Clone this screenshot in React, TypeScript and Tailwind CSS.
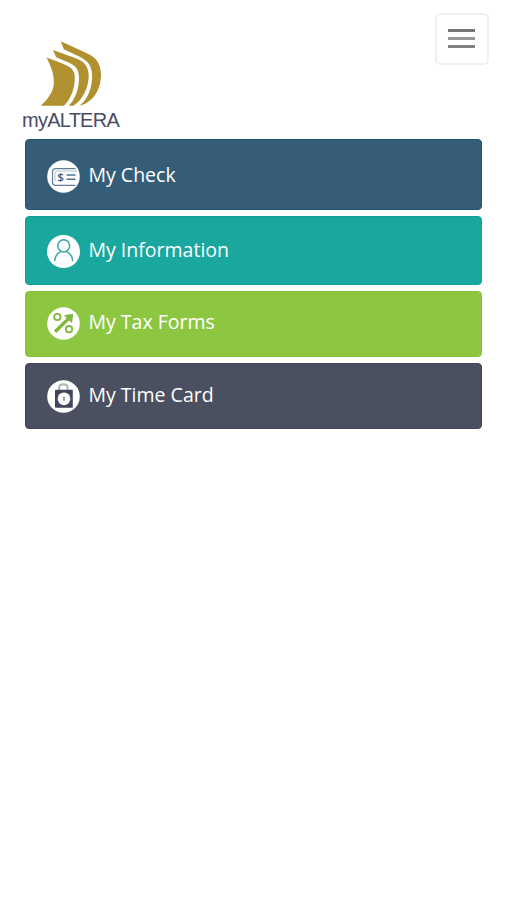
import type { ReactNode } from 'react';
import clsx from 'clsx';

interface MenuItem {
    label: string;
    className: string;
    icon: ReactNode;
}

function CheckIcon() {
    return (
        <svg viewBox="0 0 33 33" className="w-[33px] h-[33px] shrink-0">
            <circle cx="16.5" cy="16.5" r="16.3" fill="#fff" />
            <path d="M28.5 8.7H9Q5.5 8.7 5.5 12V22Q5.5 25.3 9 25.3H28.5" fill="none" stroke="#5f7d95" strokeWidth="1.2" />
            <path d="M30 11H10.5Q8 11 8 13.5V21" fill="none" stroke="#a3b4c2" strokeWidth="0.8" />
            <text x="13.6" y="21.2" textAnchor="middle" fontSize="11.5" fontWeight="600" fill="#3c5a74" className="font-['Open_Sans',sans-serif]">$</text>
            <path d="M19.5 15H28.5M19.5 19.2H28.5" stroke="#4c7792" strokeWidth="1.5" />
        </svg>
    );
}

function PersonIcon() {
    return (
        <svg viewBox="0 0 33 33" className="w-[33px] h-[33px] shrink-0">
            <circle cx="16.5" cy="16.5" r="16.5" fill="#fff" />
            <g fill="none" stroke="#3aa79f" strokeWidth="1.5" strokeLinecap="round">
                <ellipse cx="16.7" cy="10.8" rx="5.9" ry="6.1" />
                <path d="M7.8 25.5C8.1 21 10.3 18.3 13.5 16.9M25.6 25.5C25.3 21 23.1 18.3 19.9 16.9" />
            </g>
        </svg>
    );
}

function PercentIcon() {
    return (
        <svg viewBox="0 0 33 33" className="w-[33px] h-[33px] shrink-0">
            <circle cx="16.5" cy="16.5" r="16.3" fill="#fff" />
            <g fill="none" stroke="#7fb63b">
                <circle cx="10.4" cy="10" r="3.2" strokeWidth="1.8" />
                <circle cx="22" cy="22.2" r="3.2" strokeWidth="1.8" />
                <path d="M8 24.8L22 11.3" strokeWidth="3.3" />
            </g>
            <path d="M17 8.2L26.3 6.8L25 16L22.3 13.5L19.8 11Z" fill="#7fb63b" />
        </svg>
    );
}

function TimeIcon() {
    return (
        <svg viewBox="0 0 33 33" className="w-[33px] h-[33px] shrink-0">
            <circle cx="16.5" cy="16.5" r="16.3" fill="#fff" />
            <path d="M12.2 10V7.5Q12.2 4.3 16.4 4.3T20.6 7.5V10" fill="none" stroke="#b5b7ba" strokeWidth="2.2" />
            <rect x="8" y="9.8" width="17.8" height="18" rx="0.8" fill="#41465b" />
            <circle cx="17" cy="18.8" r="6.4" fill="#fff" />
            <path d="M17 16.5V20.8" stroke="#888b95" strokeWidth="1.5" />
        </svg>
    );
}

const items: MenuItem[] = [
    { label: 'My Check', className: 'h-[71px] bg-[#355d77] border-[#215572] pt-[3px]', icon: <CheckIcon /> },
    { label: 'My Information', className: 'h-[69px] bg-[#19a79e] border-[#129f96] pt-px', icon: <PersonIcon /> },
    { label: 'My Tax Forms', className: 'h-[66px] bg-[#8dc742] border-[#86c237] pb-[2px]', icon: <PercentIcon /> },
    { label: 'My Time Card', className: 'h-[66px] bg-[#4a505f] border-[#414658]', icon: <TimeIcon /> },
];

function Logo() {
    return (
        <div className="mt-[40px] ml-[22px] w-[98px]">
            <svg viewBox="0 0 98 67" className="w-[98px] h-[67px]" fill="#b0902f">
                <path d="M24.5 17.6L38 22.6C46 26.5 52.5 27.5 52.8 37C53 48 49 59 42 65.8H18.7C25 60 31 53 31.8 44C32.3 35 29 26 24.5 17.6Z" />
                <path d="M31 10L53 18C61 21 66.6 25 66.7 36C66.5 48 60.5 60 51.5 65.8H46.8C53.5 59 57.3 48 57 37C56.7 28.5 53 25.5 47 22.7L34.2 17.2Z" />
                <path d="M38.8 1.2L60 11C70 15.5 78.5 19 79 34C79 49 72 62 57.5 65.8C66 59 70.3 48 70.1 35C69.8 24 64 19.6 55 15.6L41.8 9.2Z" />
            </svg>
            <div className="mt-px font-['Liberation_Sans',sans-serif] text-[20px] leading-[24px] tracking-[-0.75px] text-[#494c64] whitespace-nowrap">
                myALTERA
            </div>
        </div>
    );
}

export default function App() {
    return (
        <div className="w-full min-h-screen bg-white font-['Open_Sans',sans-serif]">
            {/* Header */}
            <header className="flex items-start justify-between h-[139px] pr-[17px]">
                <Logo />
                <button
                    aria-label="Menu"
                    className="mt-[13px] w-[54px] h-[52px] flex flex-col items-center justify-center gap-[5px] pb-[2px] pr-px rounded-[5px] border-2 border-[#f0f0f0] bg-white"
                >
                    <span className="w-[27px] h-[3px] bg-[#777777]" />
                    <span className="w-[27px] h-[3px] bg-[#999999]" />
                    <span className="w-[27px] h-[3px] bg-[#808080]" />
                </button>
            </header>

            {/* Main menu */}
            <nav className="ml-[25px] w-[457px] flex flex-col gap-[6px]">
                {items.map((item) => (
                    <a
                        key={item.label}
                        className={clsx('flex items-center gap-[8.5px] pl-[21px] rounded-[4px] border text-white', item.className)}
                    >
                        {item.icon}
                        <span className="text-[19.5px] leading-[26px] -mt-[3px] whitespace-nowrap">{item.label}</span>
                    </a>
                ))}
            </nav>
        </div>
    );
}
